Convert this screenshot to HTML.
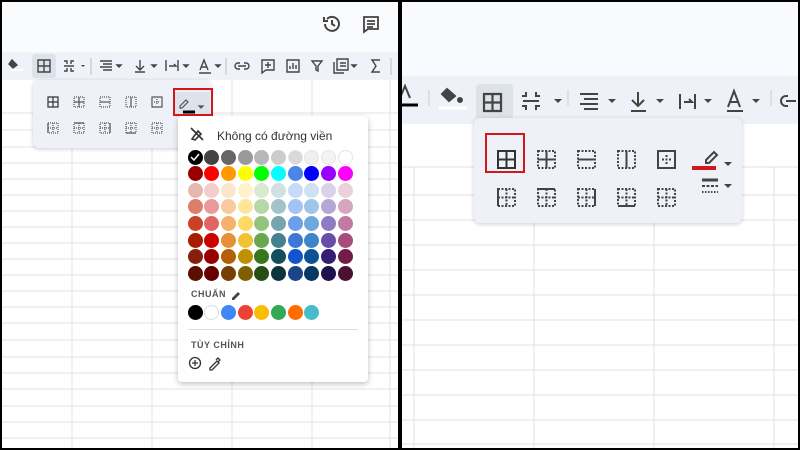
<!DOCTYPE html>
<html><head><meta charset="utf-8">
<style>
*{margin:0;padding:0;box-sizing:border-box}
body{width:800px;height:450px;background:#000;position:relative;overflow:hidden;font-family:"Liberation Sans","Noto Sans CJK SC",sans-serif}
.abs{position:absolute}
.panel{position:absolute;background:#fff;overflow:hidden}
.c{position:absolute;border-radius:50%}
svg{position:absolute;overflow:visible}
</style></head><body>

<!-- LEFT PANEL -->
<div class="panel" style="left:2px;top:2px;width:396px;height:446px">
  <div class="abs" style="left:0;top:0;width:396px;height:50px;background:#f9fbfd"></div>
  <div class="abs" style="left:0;top:50px;width:396px;height:28px;background:#eff3f9"></div>
  <!-- grid -->
  <svg width="396" height="446" style="left:0;top:0">
    <g stroke="#e2e3e3" stroke-width="1">
      <line x1="0" y1="111" x2="396" y2="111"/>
      <line x1="0" y1="128" x2="396" y2="128"/><line x1="0" y1="145" x2="396" y2="145"/>
      <line x1="0" y1="161" x2="396" y2="161"/><line x1="0" y1="177" x2="396" y2="177"/>
      <line x1="0" y1="193" x2="396" y2="193"/><line x1="0" y1="209" x2="396" y2="209"/>
      <line x1="0" y1="225" x2="396" y2="225"/><line x1="0" y1="241" x2="396" y2="241"/>
      <line x1="0" y1="257" x2="396" y2="257"/><line x1="0" y1="273" x2="396" y2="273"/>
      <line x1="0" y1="289" x2="396" y2="289"/><line x1="0" y1="305" x2="396" y2="305"/>
      <line x1="0" y1="321" x2="396" y2="321"/><line x1="0" y1="338" x2="396" y2="338"/>
      <line x1="0" y1="355" x2="396" y2="355"/><line x1="0" y1="371" x2="396" y2="371"/>
      <line x1="0" y1="387" x2="396" y2="387"/><line x1="0" y1="404" x2="396" y2="404"/>
      <line x1="0" y1="420" x2="396" y2="420"/><line x1="0" y1="436" x2="396" y2="436"/>
      <line x1="70" y1="78" x2="70" y2="446"/><line x1="150" y1="78" x2="150" y2="446"/>
      <line x1="230" y1="78" x2="230" y2="446"/><line x1="310" y1="78" x2="310" y2="446"/>
      <line x1="388" y1="78" x2="388" y2="446"/>
    </g>
  </svg>
  <!-- top right icons -->
  <svg width="20" height="20" style="left:320px;top:12px" fill="none" stroke="#444" stroke-width="2">
    <path d="M3 10a7 7 0 1 0 2-5"/><path d="M2 3v4h4"/><path d="M10 6v4l3 2"/>
  </svg>
  <svg width="20" height="20" style="left:360px;top:13px" fill="none" stroke="#444" stroke-width="1.8">
    <path d="M2 2h14v12h-10l-4 3z"/><path d="M5 6h8M5 9h8M5 12h6"/>
  </svg>
  <!-- toolbar icons -->
  <svg width="400" height="30" style="left:0;top:50px" fill="none" stroke="#444" stroke-width="1.4">
    <path d="M10 8l5 5-4 3-4-4z" fill="#444"/><path d="M9 18h12" stroke="#fff" stroke-width="2"/>
    <rect x="30" y="2" width="24" height="24" rx="3" fill="#dde3ea" stroke="none"/>
    <path d="M36 8h12v12h-12zM42 8v12M36 14h12"/>
    <path d="M62 9h3v3M62 19h3v-3M72 9h-3v3M72 19h-3v-3M62 14h10"/><path d="M79 13l2 2 2-2" fill="#444" stroke="none"/>
    <line x1="89" y1="6" x2="89" y2="23" stroke="#ccc"/>
    <path d="M98 9h12M101 12h9M98 15h12M101 18h9"/><path d="M115 13l2 2 2-2z" fill="#444"/>
    <path d="M138 8v10M134 14l4 4 4-4M133 20h10"/><path d="M150 13l2 2 2-2z" fill="#444"/>
    <path d="M164 8v11M176 8v11M167 14h7l-2-2"/><path d="M182 13l2 2 2-2z" fill="#444"/>
    <path d="M198 18l4-10 4 10M199 15h6M197 21h12"/><path d="M214 13l2 2 2-2z" fill="#444"/>
    <line x1="224" y1="6" x2="224" y2="23" stroke="#ccc"/>
    <path d="M236 14h8M238 11h-2a3 3 0 0 0 0 6h2M242 11h2a3 3 0 0 1 0 6h-2"/>
    <path d="M260 8h12v10h-8l-4 3zM266 10v6M263 13h6"/>
    <path d="M285 8h12v12h-12zM288 17v-3M291 17v-6M294 17v-4"/>
    <path d="M310 9h10l-4 5v5l-2-1v-4z"/>
    <path d="M332 10v11h10M335 7h11v11h-11zM338 11h6M338 14h6"/><path d="M350 13l2 2 2-2z" fill="#444"/>
    <path d="M378 8h-8l4 6-4 6h8"/>
    <line x1="389" y1="6" x2="389" y2="23" stroke="#ccc"/>
  </svg>

  <!-- borders menu -->
  <div class="abs" style="left:31px;top:78px;width:178px;height:68px;background:#eef2f8;border-radius:6px;box-shadow:0 1px 4px rgba(0,0,0,.2)"></div>
  <svg width="180" height="70" style="left:31px;top:78px" fill="none" stroke="#555" stroke-width="1.2">
    <path d="M15 17h10v10h-10zM20 17v10M15 22h10" stroke="#333"/>
    <g stroke-dasharray="1 1"><path d="M41 17h10v10h-10z"/></g><path d="M46 17v10M41 22h10"/>
    <g stroke-dasharray="1 1"><path d="M67 17h10v10h-10z"/></g><path d="M67 22h10"/>
    <g stroke-dasharray="1 1"><path d="M93 17h10v10h-10z"/></g><path d="M98 17v10"/>
    <path d="M119 17h10v10h-10z"/><g stroke-dasharray="1 1"><path d="M124 19v6M121 22h6"/></g>
    <rect x="142" y="12" width="35" height="25" fill="#dde3ea" stroke="none"/>
    <path d="M147 26l6-6 2 2-6 6h-2z"/><path d="M150 32h12" stroke="#000" stroke-width="3"/><path d="M166 26l2 2 2-2z" fill="#444"/>
    <g stroke-dasharray="1 1">
      <path d="M15 43h10v10h-10zM20 43v10M15 48h10"/>
      <path d="M41 43h10v10h-10zM46 43v10M41 48h10"/>
      <path d="M67 43h10v10h-10zM72 43v10M67 48h10"/>
      <path d="M93 43h10v10h-10zM98 43v10M93 48h10"/>
      <path d="M119 43h10v10h-10zM124 43v10M119 48h10"/>
    </g>
    <path d="M15 43v10"/><path d="M41 43h10"/><path d="M77 43v10"/><path d="M93 53h10"/>
  </svg>
  <div class="abs" style="left:171px;top:86px;width:40px;height:28px;border:2px solid #d0191c"></div>

  <!-- color popup -->
  <div class="abs" style="left:176px;top:114px;width:190px;height:266px;background:#fff;border-radius:4px;box-shadow:0 2px 6px rgba(0,0,0,.25)"></div>
  <svg width="14" height="14" style="left:188px;top:125px" fill="none" stroke="#333" stroke-width="1.6"><path d="M2 12l6-8 3 3-6 6zM1 1l12 12"/></svg>
  <div class="abs" style="left:215px;top:127px;font-size:12px;color:#333">Không có đường viền</div>
  <div id="pal"></div>
  <div class="abs" style="left:189px;top:287px;font-size:9px;font-weight:bold;color:#555;letter-spacing:.5px">CHUẨN</div>
  <svg width="12" height="12" style="left:228px;top:286px" fill="#444"><path d="M2 10l6-6 2 2-6 6H2z"/></svg>
  <div class="abs" style="left:186px;top:327px;width:170px;height:1px;background:#ddd"></div>
  <div class="abs" style="left:189px;top:338px;font-size:9px;font-weight:bold;color:#555;letter-spacing:.5px">TÙY CHỈNH</div>
  <svg width="40" height="14" style="left:186px;top:354px" fill="none" stroke="#333" stroke-width="1.3">
    <circle cx="7" cy="7" r="5.5"/><path d="M7 4v6M4 7h6"/><path d="M22 12l7-7 2 2-7 7h-2zM28 4l2-2 2 2-2 2"/>
  </svg>
</div>

<!-- RIGHT PANEL -->
<div class="panel" style="left:402px;top:2px;width:396px;height:446px">
  <div class="abs" style="left:0;top:0;width:396px;height:74px;background:#f8fafd"></div>
  <div class="abs" style="left:0;top:74px;width:396px;height:48px;background:#eef2f8"></div>
  <svg width="396" height="446" style="left:0;top:0">
    <g stroke="#e0e1e1" stroke-width="1">
      <line x1="0" y1="165" x2="396" y2="165"/><line x1="0" y1="193" x2="396" y2="193"/>
      <line x1="0" y1="218" x2="396" y2="218"/><line x1="0" y1="243" x2="396" y2="243"/>
      <line x1="0" y1="268" x2="396" y2="268"/><line x1="0" y1="293" x2="396" y2="293"/>
      <line x1="0" y1="318" x2="396" y2="318"/><line x1="0" y1="343" x2="396" y2="343"/>
      <line x1="0" y1="368" x2="396" y2="368"/><line x1="0" y1="393" x2="396" y2="393"/>
      <line x1="0" y1="418" x2="396" y2="418"/><line x1="0" y1="442" x2="396" y2="442"/>
      <line x1="12" y1="165" x2="12" y2="446"/><line x1="132" y1="165" x2="132" y2="446"/>
      <line x1="252" y1="165" x2="252" y2="446"/><line x1="372" y1="165" x2="372" y2="446"/>
    </g>
  </svg>
  <svg width="396" height="50" style="left:0;top:74px" fill="none" stroke="#444" stroke-width="2">
    <path d="M-2 22l5-12 5 12"/><path d="M-4 29h20" stroke="#000" stroke-width="3"/>
    <line x1="27" y1="14" x2="27" y2="30" stroke="#ccc" stroke-width="1"/>
    <path d="M45 13l8 7-6 5-7-7z" fill="#444"/><circle cx="58" cy="24" r="2" fill="#444"/><path d="M37 32h28" stroke="#fff" stroke-width="3"/>
    <rect x="74" y="8" width="37" height="36" rx="4" fill="#dde2e9" stroke="none"/>
    <path d="M82 18h17v17h-17zM90.5 18v17M82 26.5h17" stroke-width="2.2"/>
    <path d="M120 20h4v-4M120 30h4v4M138 20h-4v-4M138 30h-4v4M121 25h16"/><path d="M152 23l4 4 4-4z" fill="#444" stroke="none"/>
    <line x1="166" y1="14" x2="166" y2="30" stroke="#ccc" stroke-width="1"/>
    <path d="M178 18h18M182 23h14M178 28h18M182 33h14"/><path d="M206 23l4 4 4-4z" fill="#444" stroke="none"/>
    <path d="M236 16v13M230 24l6 6 6-6M229 35h15"/><path d="M254 23l4 4 4-4z" fill="#444" stroke="none"/>
    <path d="M278 18v15M293 18v15M282 26h8l-3-3"/><path d="M302 23l4 4 4-4z" fill="#444" stroke="none"/>
    <path d="M326 31l6-16 6 16M328 26h8M325 35h16"/><path d="M350 23l4 4 4-4z" fill="#444" stroke="none"/>
    <line x1="369" y1="14" x2="369" y2="30" stroke="#ccc" stroke-width="1"/>
    <path d="M384 25h10M386 20h-2a5 5 0 0 0 0 10h2"/>
  </svg>
  <!-- menu -->
  <div class="abs" style="left:72px;top:116px;width:268px;height:105px;background:#eef2f8;border-radius:6px;box-shadow:0 1px 5px rgba(0,0,0,.2)"></div>
  <svg width="270" height="110" style="left:72px;top:116px" fill="none" stroke="#444" stroke-width="2">
    <path d="M24 33h17v17h-17zM32.5 33v17M24 41.5h17" stroke="#333"/>
    <g stroke-dasharray="2 1.5"><path d="M64 33h17v17h-17z"/></g><path d="M72.5 33v17M64 41.5h17"/>
    <g stroke-dasharray="2 1.5"><path d="M104 33h17v17h-17z"/></g><path d="M104 41.5h17"/>
    <g stroke-dasharray="2 1.5"><path d="M144 33h17v17h-17z"/></g><path d="M152.5 33v17"/>
    <path d="M184 33h17v17h-17z"/><g stroke-dasharray="2 1.5"><path d="M192.5 37v9M188 41.5h9"/></g>
    <path d="M232 42l8-8 3 3-8 8h-3z"/><path d="M218 50h24" stroke="#d0191c" stroke-width="4"/><path d="M250 44l4 4 4-4z" fill="#444" stroke="none"/>
    <g stroke-dasharray="2 1.5">
      <path d="M24 71h17v17h-17zM32.5 71v17M24 79.5h17"/>
      <path d="M64 71h17v17h-17zM72.5 71v17M64 79.5h17"/>
      <path d="M104 71h17v17h-17zM112.5 71v17M104 79.5h17"/>
      <path d="M144 71h17v17h-17zM152.5 71v17M144 79.5h17"/>
      <path d="M184 71h17v17h-17zM192.5 71v17M184 79.5h17"/>
    </g>
    <path d="M24 71v17M64 71h17M121 71v17M144 88h17"/>
    <path d="M228 62h16" stroke-width="3"/><path d="M228 68h16" stroke-dasharray="3 1.5"/><path d="M228 74h16" stroke-dasharray="1.5 1.5"/>
    <path d="M250 66l4 4 4-4z" fill="#444" stroke="none"/>
  </svg>
  <div class="abs" style="left:83px;top:131px;width:40px;height:40px;border:2px solid #d0191c"></div>
</div>

<!-- palette -->
<div style="position:absolute;left:0;top:0">
<script>
var rows=[
["#000","#434343","#666","#999","#b7b7b7","#ccc","#d9d9d9","#efefef","#f3f3f3","#fff"],
["#980000","#f00","#f90","#ff0","#0f0","#0ff","#4a86e8","#00f","#90f","#f0f"],
["#e6b8af","#f4cccc","#fce5cd","#fff2cc","#d9ead3","#d0e0e3","#c9daf8","#cfe2f3","#d9d2e9","#ead1dc"],
["#dd7e6b","#ea9999","#f9cb9c","#ffe599","#b6d7a8","#a2c4c9","#a4c2f4","#9fc5e8","#b4a7d6","#d5a6bd"],
["#cc4125","#e06666","#f6b26b","#ffd966","#93c47d","#76a5af","#6d9eeb","#6fa8dc","#8e7cc3","#c27ba0"],
["#a61c00","#c00","#e69138","#f1c232","#6aa84f","#45818e","#3c78d8","#3d85c6","#674ea7","#a64d79"],
["#85200c","#900","#b45f06","#bf9000","#38761d","#134f5c","#1155cc","#0b5394","#351c75","#741b47"],
["#5b0f00","#600","#783f04","#7f6000","#274e13","#0c343d","#1c4587","#073763","#20124d","#4c1130"]];
var h="";
for(var r=0;r<8;r++)for(var c=0;c<10;c++){var x=195+c*16.7,y=157+r*16.6;
h+='<div class="c" style="left:'+(x-7.5)+'px;top:'+(y-7.5)+'px;width:15px;height:15px;background:'+rows[r][c]+(r==0&&c>5?';border:1px solid #e4e4e4':'')+'"></div>';}
var st=["#000","#fff","#4285f4","#ea4335","#fbbc04","#34a853","#ff6d01","#46bdc6"];
for(var c=0;c<8;c++){var x=195+c*16.7;h+='<div class="c" style="left:'+(x-7.5)+'px;top:304.5px;width:15px;height:15px;background:'+st[c]+(c==1?';border:1px solid #ddd':'')+'"></div>';}
document.write(h);
</script>
</div>
<svg width="12" height="12" style="left:189px;top:151px" fill="none" stroke="#fff" stroke-width="1.5"><path d="M2 6l3 3 5-6"/></svg>
</body></html>
